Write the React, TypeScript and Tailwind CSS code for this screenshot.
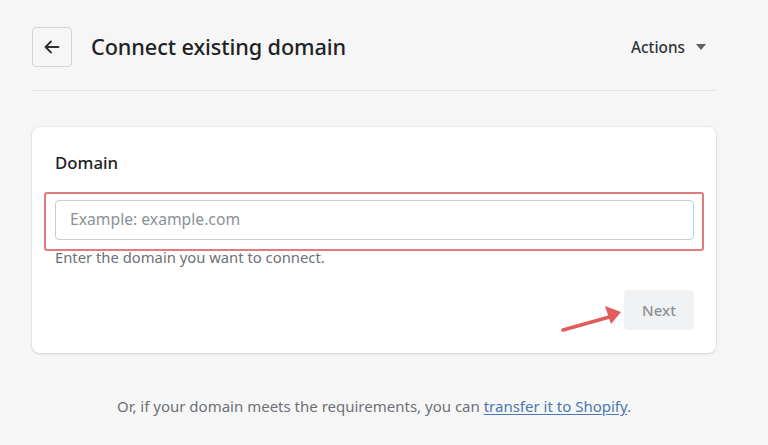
import React from "react";

export default function App() {
  return (
    <div
      className="relative w-full h-[445px] bg-[#f6f6f7] px-[32px] overflow-hidden"
      style={{ fontFamily: '"Noto Sans", "Open Sans", sans-serif' }}
    >
      <div className="w-[684px]">
        {/* Header */}
        <div className="pt-[27px] flex items-center">
          <button className="w-[40px] h-[40px] rounded-[4px] border border-[#d2d5d8] flex items-center justify-center text-[#202223] bg-[#f6f6f7]">
            <svg width="20" height="20" viewBox="0 0 20 20" fill="none" stroke="#303030" strokeWidth="1.8" strokeLinecap="round" strokeLinejoin="round">
              <path d="M16.5 10H4" />
              <path d="M9 4.5 3.5 10 9 15.5" />
            </svg>
          </button>
          <h1 className="ml-[19px] text-[21.7px] leading-[28px] font-medium text-[#202223] tracking-[-0.1px]">
            Connect existing domain
          </h1>
          <div className="ml-auto mr-[10px] flex items-center gap-[11px] text-[15.3px] font-medium text-[#303336]">
            <span>Actions</span>
            <svg width="10" height="6" viewBox="0 0 10 6">
              <path d="M0 0h10L5 6z" fill="#5c5f62" />
            </svg>
          </div>
        </div>
        <div className="mt-[23px] border-t border-[#e1e3e5]" />

        {/* Card */}
        <div className="mt-[36px] bg-white rounded-[8px] shadow-[0_0_0_1px_rgba(63,63,68,0.04),0_1px_3px_rgba(63,63,68,0.15)] pt-[24px] pl-[23px] pr-[22px] pb-[23px]">
          <div className="text-[16.8px] leading-[24px] font-medium text-[#202223]">Domain</div>
          <div className="relative mt-[25px]">
            <div className="h-[40px] rounded-[4px] border border-[#c9cccf] flex items-center pl-[14px] text-[15.7px] text-[#8c9196]">
              Example: example.com
            </div>
            <div className="absolute left-[-11px] right-[-10px] top-[-8px] bottom-[-11px] border-2 border-[#e07c7c] rounded-[3px] pointer-events-none" />
          </div>
          <div className="mt-[7px] text-[14.8px] leading-[20px] text-[#6d7175]">
            Enter the domain you want to connect.
          </div>
          <div className="mt-[23px] flex justify-end">
            <button className="w-[70px] h-[40px] rounded-[4px] bg-[#f1f2f3] text-[15px] font-medium text-[#8c9196]">
              Next
            </button>
          </div>
        </div>

        {/* Footer */}
        <div className="mt-[43px] text-center text-[15px] leading-[20px] text-[#6d7175]">
          Or, if your domain meets the requirements, you can{" "}
          <span className="text-[#4a78b0] underline underline-offset-2">transfer it to Shopify</span>.
        </div>
      </div>

      {/* Red arrow overlay */}
      <svg className="absolute left-[555px] top-[300px]" width="75" height="40" viewBox="0 0 75 40">
        <path d="M8 30 L58 16" stroke="#e25c5c" strokeWidth="3.5" strokeLinecap="round" />
        <path d="M50 6 L66 12 L56 24 Z" fill="#e25c5c" />
      </svg>
    </div>
  );
}
